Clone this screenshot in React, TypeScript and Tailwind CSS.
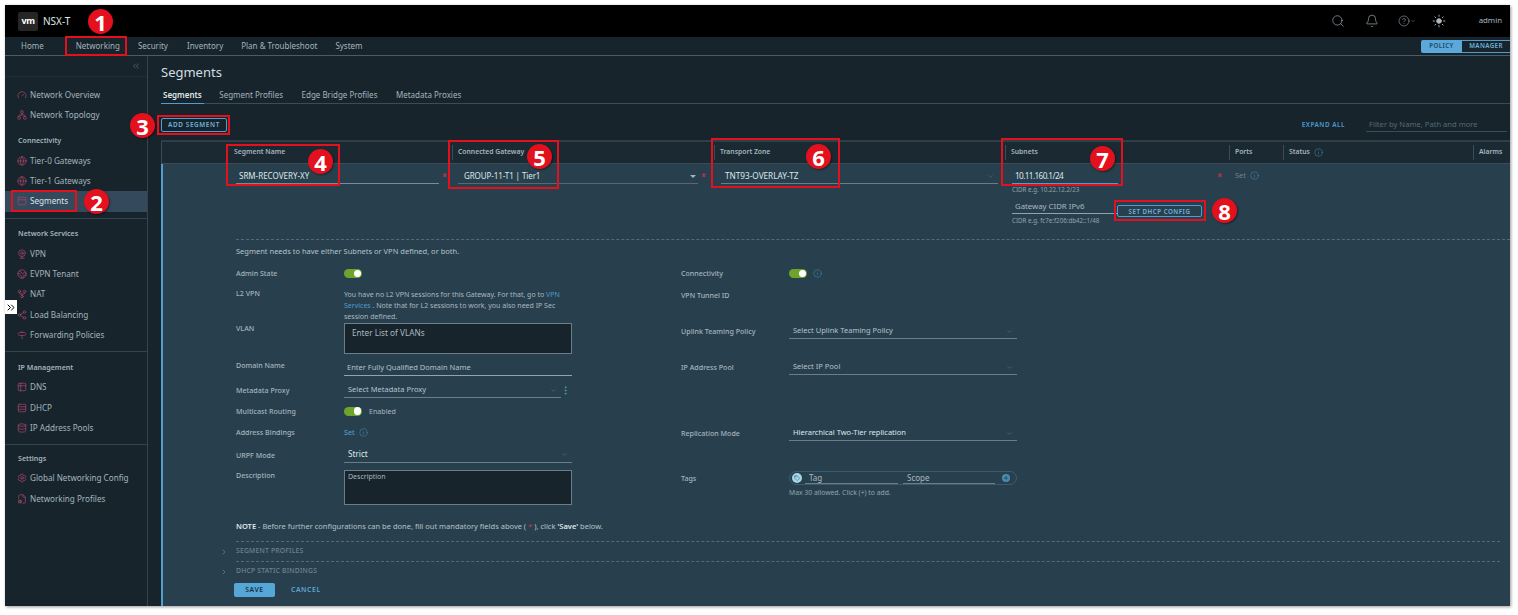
import React from "react";
import {
  Search, Bell, Sun, ChevronDown, ChevronRight, ChevronsLeft, Gauge, Network, Globe, PanelTop, Webcam, Earth,
  GitFork, Share2, Signpost, Table2, Rows3, Database, Settings, FileCog, Info, Plus, Tag, CircleHelp, EllipsisVertical, ChevronsRight,
} from "lucide-react";

const font = "[font-family:Inter,'Liberation_Sans',sans-serif]";

type Item = { label: string; icon: React.ElementType; active?: boolean };

function SideRow({ label, icon: Icon, active }: Item) {
  return (
    <div className={`flex h-[20.33px] items-center gap-[3px] pl-[12px] text-[8.15px] ${active ? "bg-[#35495c] text-[#dbe4ea]" : "text-[#a3b4be]"}`}>
      <Icon size={10} strokeWidth={1.7} className="shrink-0 text-[#a8456f]" />
      <span>{label}</span>
    </div>
  );
}

function SideGroup({ title, items, border = true }: { title?: string; items: Item[]; border?: boolean }) {
  return (
    <div className={border ? "border-b border-[#33444e] pb-[6px]" : ""}>
      {title ? <div className="flex h-[20px] items-center pl-[13px] text-[7.1px] font-semibold text-[#a3b4be]">{title}</div> : null}
      {items.map((i) => (
        <SideRow key={i.label} {...i} />
      ))}
    </div>
  );
}

function Sidebar() {
  return (
    <aside className="flex w-[143px] shrink-0 flex-col border-r border-[#33444e] bg-[#17242b]">
      <div className="flex h-[21px] items-center justify-end border-b border-[#1f2f38] pr-[6px] text-[#7f929d]">
        <ChevronsLeft size={10} strokeWidth={1.2} />
      </div>
      <div className="h-[8px]" />
      <SideGroup border={false} items={[{ label: "Network Overview", icon: Gauge }, { label: "Network Topology", icon: Network }]} />
      <div className="h-[5px]" />
      <SideGroup
        title="Connectivity"
        items={[{ label: "Tier-0 Gateways", icon: Globe }, { label: "Tier-1 Gateways", icon: Globe }, { label: "Segments", icon: PanelTop, active: true }]}
      />
      <div className="h-[5px]" />
      <SideGroup
        title="Network Services"
        items={[
          { label: "VPN", icon: Webcam },
          { label: "EVPN Tenant", icon: Earth },
          { label: "NAT", icon: GitFork },
          { label: "Load Balancing", icon: Share2 },
          { label: "Forwarding Policies", icon: Signpost },
        ]}
      />
      <div className="h-[5px]" />
      <SideGroup
        title="IP Management"
        items={[{ label: "DNS", icon: Table2 }, { label: "DHCP", icon: Rows3 }, { label: "IP Address Pools", icon: Database }]}
      />
      <div className="h-[3px]" />
      <SideGroup border={false} title="Settings" items={[{ label: "Global Networking Config", icon: Settings }, { label: "Networking Profiles", icon: FileCog }]} />
    </aside>
  );
}

function Toggle() {
  return (
    <span className="flex h-[9px] w-[18px] items-center justify-end rounded-full bg-[#6ea32c] pr-[1px]">
      <span className="h-[7.5px] w-[7.5px] rounded-full bg-white" />
    </span>
  );
}

function InfoI({ className = "text-[#4a90bd]" }: { className?: string }) {
  return <Info size={9} strokeWidth={1.3} className={className} />;
}

function Label({ children }: { children: React.ReactNode }) {
  return <span className="w-[108px] shrink-0 text-[7.1px] font-medium text-[#a3b4be]">{children}</span>;
}

function FieldRow({ h, label, children, center = true }: { h: number; label: string; children?: React.ReactNode; center?: boolean }) {
  return (
    <div style={{ height: h }} className={`flex ${center ? "items-center" : "items-start"}`}>
      <Label>{label}</Label>
      {children}
    </div>
  );
}

function SelectBox({ text, bright = false, width = "w-[228px]", size = "text-[7.5px]" }: { text: string; bright?: boolean; width?: string; size?: string }) {
  return (
    <div className={`flex h-[15px] ${width} items-center justify-between border-b border-[#6b7d88] pl-[4px] pr-[4px] ${size} ${bright ? "text-[#dfe7eb]" : "text-[#b4c2ca]"}`}>
      <span>{text}</span>
      <ChevronDown size={7} strokeWidth={1.2} className="text-[#7f929d]" />
    </div>
  );
}

function LeftColumn() {
  return (
    <div className="w-[445px] shrink-0">
      <FieldRow h={21} label="Admin State"><Toggle /></FieldRow>
      <div className="h-[4px]" />
      <FieldRow h={35} label="L2 VPN" center={false}>
        <div className="w-[226px] pt-[1px] text-[7px] leading-[11px] text-[#a9b8c1]">
          <div>You have no L2 VPN sessions for this Gateway. For that, go to <span className="text-[#4a9bd0]">VPN</span></div>
          <div><span className="text-[#4a9bd0]">Services</span> . Note that for L2 sessions to work, you also need IP Sec</div>
          <div>session defined.</div>
        </div>
      </FieldRow>
      <FieldRow h={31} label="VLAN" center={false}>
        <div className="h-[31px] w-[228px] border border-[#6b7d88] bg-[#17242b] px-[7px] py-[3px] text-[8.2px] text-[#a9b8c1]">Enter List of VLANs</div>
      </FieldRow>
      <FieldRow h={23} label="Domain Name">
        <div className="mt-[5px] h-[15px] w-[228px] border-b border-[#93a3ad] pl-[3px] text-[7.5px] leading-[13px] text-[#b4c2ca]">Enter Fully Qualified Domain Name</div>
      </FieldRow>
      <FieldRow h={27} label="Metadata Proxy">
        <SelectBox text="Select Metadata Proxy" width="w-[217px]" />
        <EllipsisVertical size={11} strokeWidth={2} className="ml-[-1px] text-[#4a9bd0]" />
      </FieldRow>
      <FieldRow h={14} label="Multicast Routing">
        <Toggle />
        <span className="ml-[7px] text-[7.1px] text-[#a9b8c1]">Enabled</span>
      </FieldRow>
      <FieldRow h={28} label="Address Bindings">
        <span className="text-[7.1px] font-medium text-[#4a9bd0]">Set</span>
        <span className="ml-[4px] flex"><InfoI /></span>
      </FieldRow>
      <FieldRow h={18} label="URPF Mode"><SelectBox text="Strict" bright size="text-[8.2px]" /></FieldRow>
      <div className="h-[6px]" />
      <FieldRow h={35} label="Description" center={false}>
        <div className="h-[35px] w-[228px] border border-[#6b7d88] bg-[#17242b] px-[3px] py-[1px] text-[7px] text-[#a9b8c1]">Description</div>
      </FieldRow>
    </div>
  );
}

function RightColumn() {
  return (
    <div className="w-[336px] shrink-0">
      <FieldRow h={21} label="Connectivity">
        <Toggle />
        <span className="ml-[6px] flex"><InfoI /></span>
      </FieldRow>
      <FieldRow h={23} label="VPN Tunnel ID" />
      <div className="h-[13px]" />
      <FieldRow h={23} label="Uplink Teaming Policy"><SelectBox text="Select Uplink Teaming Policy" /></FieldRow>
      <div className="h-[13px]" />
      <FieldRow h={23} label="IP Address Pool"><SelectBox text="Select IP Pool" /></FieldRow>
      <div className="h-[43px]" />
      <FieldRow h={23} label="Replication Mode"><SelectBox text="Hierarchical Two-Tier replication" bright /></FieldRow>
      <div className="h-[26px]" />
      <div className="flex h-[14px] items-center">
        <Label>Tags</Label>
        <div className="flex h-[14px] w-[228px] items-center rounded-full border border-[#3d5a6c] px-[2px]">
          <span className="flex h-[10px] w-[10px] shrink-0 items-center justify-center rounded-full bg-[#a5d6ea] text-[#35607a]"><Tag size={6} /></span>
          <span className="ml-[3px] h-[11px] w-[93px] border-b border-[#6b7d88] pl-[4px] text-[8px] leading-[9px] text-[#a9b8c1]">Tag</span>
          <span className="ml-[5px] h-[11px] w-[92px] border-b border-[#6b7d88] pl-[4px] text-[8px] leading-[9px] text-[#a9b8c1]">Scope</span>
          <span className="ml-[7px] flex h-[8px] w-[8px] shrink-0 items-center justify-center rounded-full bg-[#4a8bb5] text-[#28404d]"><Plus size={6} strokeWidth={3} /></span>
        </div>
      </div>
      <div className="pl-[108px] pt-[3px] text-[6.8px] text-[#93a3ad]">Max 30 allowed. Click (+) to add.</div>
    </div>
  );
}

function Star({ className }: { className: string }) {
  return <span className={`block text-[9px] leading-none text-[#d9304a] ${className}`}>*</span>;
}

function SectionRow({ text }: { text: string }) {
  return (
    <div className="relative flex h-[19.5px] items-center border-t border-dashed border-[#566975] text-[6.8px] font-medium tracking-[0.2px] text-[#6f828e]">
      <ChevronRight size={8} strokeWidth={1.4} className="absolute left-[-16px] top-[6px] text-[#93a3ad]" />
      {text}
    </div>
  );
}

function Head({ w, first, children }: { w: string; first?: boolean; children: React.ReactNode }) {
  return (
    <div className={`${w} ${first ? "" : "border-l border-[#3a4c57] pl-[5px]"} my-[3px] flex h-[15px] shrink-0 items-center gap-[4px] text-[6.8px] font-semibold text-[#a3b4be]`}>
      {children}
    </div>
  );
}

function Table() {
  return (
    <div className="mt-[8px] flex min-h-0 flex-1 flex-col border-t-2 border-[#2f3f49]">
      <div className="flex h-[22px] shrink-0 border-b border-l border-[#3a4c57] bg-[#1b2a32] pl-[72px]">
        <Head w="w-[218px]" first>Segment Name</Head>
        <Head w="w-[262px]">Connected Gateway</Head>
        <Head w="w-[291px]">Transport Zone</Head>
        <Head w="w-[224px]">Subnets</Head>
        <Head w="w-[54px]">Ports</Head>
        <Head w="w-[190px]">Status <InfoI /></Head>
        <Head w="w-[36px]">Alarms</Head>
      </div>
      <div className="min-h-0 flex-1 border-l-2 border-[#4f9ecf] bg-[#28404d] pl-[73px]">
        <div className="flex h-[76px] border-b border-dashed border-[#566975]">
          <div className="flex w-[222px] items-start pt-[5px]">
            <div className="h-[15px] w-[203px] border-b border-[#7c8c96] pl-[3px] text-[8px] leading-[14px] text-[#dfe7eb]">SRM-RECOVERY-XY</div>
            <Star className="ml-[3px] mt-[3px]" />
          </div>
          <div className="flex w-[263px] items-start pt-[5px]">
            <div className="flex h-[15px] w-[240px] items-center justify-between border-b border-[#566975] pl-[6px] pr-[2px] text-[8px] tracking-[-0.1px] text-[#dfe7eb]">
              <span>GROUP-11-T1 | Tier1</span>
              <span className="h-0 w-0 border-x-[3px] border-t-[3px] border-x-transparent border-t-[#a3b4be]" />
            </div>
            <Star className="ml-[3px] mt-[3px]" />
          </div>
          <div className="w-[291px] pt-[5px]">
            <SelectBox text="TNT93-OVERLAY-TZ" bright width="w-[277px]" size="text-[8.2px]" />
          </div>
          <div className="w-[223px] pt-[5px]">
            <div className="flex">
              <div className="h-[15px] w-[106px] border-b border-[#4f9ecf] pl-[3px] text-[8.2px] leading-[14px] tracking-[-0.6px] text-[#dfe7eb]">10.11.160.1/24</div>
              <Star className="ml-[99px] mt-[3px]" />
            </div>
            <div className="mt-[1px] text-[6.2px] text-[#93a3ad]">CIDR e.g. 10.22.12.2/23</div>
            <div className="mt-[3px] flex items-start">
              <div className="mt-[2px] h-[15px] w-[106px] border-b border-[#93a3ad] pl-[3px] text-[7.8px] leading-[14px] text-[#a9b8c1]">Gateway CIDR IPv6</div>
              <button className="ml-[-1px] mt-[8px] flex h-[12px] w-[85px] items-center justify-center rounded-[2px] border border-[#4f9ecf] text-[6.2px] font-semibold tracking-[0.5px] text-[#6fb3de]">SET DHCP CONFIG</button>
            </div>
            <div className="mt-[-1px] text-[6.2px] text-[#93a3ad]">CIDR e.g. fc7e:f206:db42::1/48</div>
          </div>
          <div className="flex h-fit items-center gap-[4px] pt-[6px] text-[7.4px] text-[#6f828e]">
            Set <InfoI />
          </div>
        </div>
        <div className="flex h-[23px] items-center text-[7.5px] text-[#b4c2ca]">Segment needs to have either Subnets or VPN defined, or both.</div>
        <div className="flex">
          <LeftColumn />
          <RightColumn />
        </div>
        <div className="flex h-[36px] items-center pt-[8px] text-[7.5px] text-[#b4c2ca]">
          <b className="font-semibold text-[#dfe7eb]">NOTE</b>&nbsp;- Before further configurations can be done, fill out mandatory fields above (&nbsp;<span className="text-[#d9304a]">*</span>&nbsp;), click&nbsp;<b className="font-semibold text-[#dfe7eb]">'Save'</b>&nbsp;below.
        </div>
        <div className="w-[1264px]">
          <SectionRow text="SEGMENT PROFILES" />
          <SectionRow text="DHCP STATIC BINDINGS" />
        </div>
        <div className="mt-[3px] flex items-center">
          <button className="ml-[-2px] h-[14px] w-[41px] rounded-[2px] bg-[#55a7d8] text-[6.8px] font-semibold tracking-[0.6px] text-[#17303f]">SAVE</button>
          <button className="ml-[16px] text-[6.8px] font-semibold tracking-[0.6px] text-[#5fa6d2]">CANCEL</button>
        </div>
      </div>
    </div>
  );
}

function Main() {
  return (
    <main className="flex min-w-0 flex-1 flex-col bg-[#17242b] pl-[13px]">
      <div className="flex h-[29px] items-end pb-[2px] text-[13px] leading-[22px] text-[#d3dde3]">Segments</div>
      <div className="flex h-[19px] items-center gap-[18.5px] border-b border-[#3a4c57] pt-[2px] text-[8px] text-[#a3b4be]">
        <span className="relative mr-[-3px] flex h-full items-center px-[2px] font-semibold text-[#dfe7eb]">
          Segments
          <span className="absolute inset-x-0 bottom-[-1px] h-[1px] bg-[#4f9ecf]" />
        </span>
        <span>Segment Profiles</span>
        <span>Edge Bridge Profiles</span>
        <span>Metadata Proxies</span>
      </div>
      <div className="flex h-[28px] items-end justify-between pl-0 pr-[3px]">
        <button className="h-[14px] w-[66px] rounded-[2px] border border-[#4f9ecf] text-[6.4px] font-semibold tracking-[0.6px] text-[#6fb3de]">ADD SEGMENT</button>
        <div className="flex items-center">
          <span className="mr-[21px] text-[6.4px] font-semibold tracking-[0.5px] text-[#4a9bd0]">EXPAND ALL</span>
          <div className="h-[14px] w-[141px] border-b border-[#3a4c57] pl-[3px] text-[7.6px] leading-[13px] text-[#566975]">Filter by Name, Path and more</div>
        </div>
      </div>
      <Table />
    </main>
  );
}

function Box({ className }: { className: string }) {
  return <div className={`pointer-events-none absolute border-2 border-[#e3101e] ${className}`} />;
}

function Badge({ n, className }: { n: number; className: string }) {
  return (
    <div className={`absolute flex h-[25px] w-[25px] items-center justify-center rounded-full bg-[#e3101e] text-[22px] font-bold leading-none text-white shadow-[1px_1px_2px_rgba(0,0,0,0.45)] [font-family:'Liberation_Sans',sans-serif] ${className}`}>
      {n}
    </div>
  );
}

export default function App() {
  return (
    <div className={`relative h-[615px] w-[1518px] overflow-hidden bg-white pb-[9px] pl-[5px] pr-[8px] pt-[5px] ${font}`}>
      <div className="flex h-full flex-col overflow-hidden bg-[#17242b] shadow-[1px_1px_3px_rgba(0,0,0,0.4)]">
        <header className="flex h-[32px] shrink-0 items-center bg-black pl-[13px] pr-[8px] text-[#a9b8c1]">
          <span className="flex h-[19px] w-[20px] items-center justify-center rounded-[2px] bg-[#262626] text-[9px] font-bold tracking-[-0.5px] text-white">vm</span>
          <span className="ml-[5px] text-[10px] text-[#dfe7eb]">NSX-T</span>
          <Search size={14} strokeWidth={1.1} className="ml-auto" />
          <Bell size={14} strokeWidth={1.1} className="ml-[20px]" />
          <span className="ml-[19px] flex items-center">
            <CircleHelp size={12} strokeWidth={1.1} />
            <ChevronDown size={6} strokeWidth={1.4} />
          </span>
          <Sun size={14} strokeWidth={1.6} className="ml-[16px] fill-current" />
          <span className="ml-[33px] text-[7.8px]">admin</span>
        </header>
        <nav className="flex h-[19px] shrink-0 items-center border-b border-[#4a5c67] pl-[16px] text-[8px] text-[#a3b4be]">
          <span>Home</span>
          <span className="relative ml-[32px] flex h-full items-center">
            Networking
            <span className="absolute inset-x-0 bottom-0 h-[1px] bg-[#a3b4be]" />
          </span>
          <span className="ml-[18px]">Security</span>
          <span className="ml-[19px]">Inventory</span>
          <span className="ml-[18px]">Plan &amp; Troubleshoot</span>
          <span className="ml-[18px]">System</span>
          <div className="ml-auto flex h-[13px] text-[6.2px] font-semibold tracking-[0.4px]">
            <span className="flex w-[41px] items-center justify-center rounded-l-[2px] bg-[#5aa9da] text-[#1d4a66]">POLICY</span>
            <span className="flex w-[48px] items-center justify-center border-y border-[#4f9ecf] text-[#6fb3de]">MANAGER</span>
          </div>
        </nav>
        <div className="flex min-h-0 flex-1">
          <Sidebar />
          <Main />
        </div>
      </div>

      <div className="absolute left-[5px] top-[300px] flex h-[14px] w-[12px] items-center justify-center bg-white text-black">
        <ChevronsRight size={13} strokeWidth={2} />
      </div>

      <Box className="left-[65px] top-[36px] h-[20px] w-[62px]" />
      <Box className="left-[11px] top-[190px] h-[22px] w-[66px]" />
      <Box className="left-[157px] top-[115px] h-[20px] w-[73px]" />
      <Box className="left-[226px] top-[144px] h-[42px] w-[114px]" />
      <Box className="left-[448px] top-[140px] h-[49px] w-[111px]" />
      <Box className="left-[711px] top-[138px] h-[50px] w-[129px]" />
      <Box className="left-[1001px] top-[138px] h-[48px] w-[122px]" />
      <Box className="left-[1114px] top-[200px] h-[21px] w-[92px]" />

      <Badge n={1} className="left-[88px] top-[9px]" />
      <Badge n={2} className="left-[84px] top-[189px]" />
      <Badge n={3} className="left-[130px] top-[113px]" />
      <Badge n={4} className="left-[308px] top-[149px]" />
      <Badge n={5} className="left-[527px] top-[144px]" />
      <Badge n={6} className="left-[806px] top-[144px]" />
      <Badge n={7} className="left-[1090px] top-[146px]" />
      <Badge n={8} className="left-[1212px] top-[198px]" />
    </div>
  );
}
